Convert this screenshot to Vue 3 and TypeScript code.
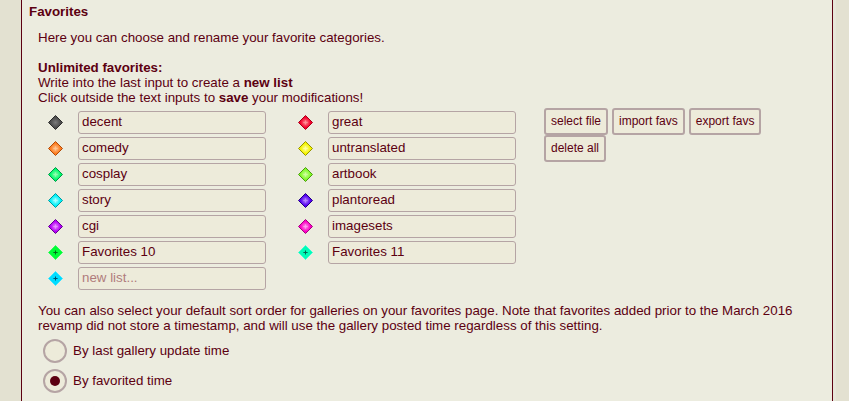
<script setup lang="ts">
import { ref } from 'vue'

interface Favorite {
  name: string
  edge: string
  fill: string
  glow: string
  extra?: boolean
}

const favorites = ref<Favorite[]>([
  { name: 'decent', edge: '#2c2c2c', fill: '#4c4c4c', glow: '#7c7c7c' },
  { name: 'great', edge: '#a80018', fill: '#f4002c', glow: '#ff8c94' },
  { name: 'comedy', edge: '#b04a08', fill: '#fc7c20', glow: '#ffc490' },
  { name: 'untranslated', edge: '#949400', fill: '#f4f400', glow: '#ffffa0' },
  { name: 'cosplay', edge: '#009448', fill: '#00f868', glow: '#90ffb0' },
  { name: 'artbook', edge: '#4c9a10', fill: '#80f828', glow: '#d0ff9c' },
  { name: 'story', edge: '#009a9e', fill: '#00f0f8', glow: '#a4ffff' },
  { name: 'plantoread', edge: '#200080', fill: '#5400f0', glow: '#b484ff' },
  { name: 'cgi', edge: '#600090', fill: '#b400f4', glow: '#e890ff' },
  { name: 'imagesets', edge: '#a40080', fill: '#fc00c4', glow: '#ff9cec' },
  { name: 'Favorites 10', edge: '#30ff58', fill: '#00fc38', glow: '#006c18', extra: true },
  { name: 'Favorites 11', edge: '#38ffd0', fill: '#00fcb8', glow: '#006450', extra: true },
  { name: '', edge: '#38e4ff', fill: '#00dcff', glow: '#005470', extra: true },
])

const sortOrder = ref('favorited')
</script>

<template>
  <div class="page">
    <main class="panel">
      <h2>Favorites</h2>
      <div class="content">
        <p class="intro">Here you can choose and rename your favorite categories.</p>
        <p>
          <b>Unlimited favorites:</b><br />
          Write into the last input to create a <b>new list</b><br />
          Click outside the text inputs to <b>save</b> your modifications!
        </p>
        <div class="editor">
          <div class="favorites">
            <div v-for="(fav, i) in favorites" :key="i" class="favorite">
              <svg width="15" height="15" viewBox="0 0 15 15">
                <defs>
                  <radialGradient :id="'gem' + i">
                    <stop offset="0" :stop-color="fav.extra ? fav.fill : fav.glow" />
                    <stop offset="0.7" :stop-color="fav.fill" />
                  </radialGradient>
                </defs>
                <path
                  d="M7.5.5 14.5 7.5 7.5 14.5.5 7.5Z"
                  :fill="`url(#gem${i})`"
                  :stroke="fav.edge"
                />
                <path
                  v-if="i > 0"
                  d="M7 5.4h1V7h1.6v1H8v1.6H7V8H5.4V7H7Z"
                  :fill="fav.glow"
                />
              </svg>
              <input v-model="fav.name" type="text" placeholder="new list..." spellcheck="false" />
            </div>
          </div>
          <div class="actions">
            <button>select file</button>
            <button>import favs</button>
            <button>export favs</button>
            <button>delete all</button>
          </div>
        </div>
        <p class="note">
          You can also select your default sort order for galleries on your favorites page. Note that
          favorites added prior to the March 2016 revamp did not store a timestamp, and will use the
          gallery posted time regardless of this setting.
        </p>
        <div class="options">
          <label><input v-model="sortOrder" type="radio" value="updated" /><span>By last gallery update time</span></label>
          <label><input v-model="sortOrder" type="radio" value="favorited" /><span>By favorited time</span></label>
        </div>
      </div>
    </main>
  </div>
</template>

<style>
body {
  background: #e3e1d1;
  overflow: hidden;
}
</style>

<style scoped>
.page {
  height: 401px;
  padding: 0 16px 0 21px;
  overflow: hidden;
  background: #e3e1d1;
  color: #5c0011;
  font: 13.333px/15px 'Liberation Sans', Arial, sans-serif;
}
.panel {
  box-sizing: border-box;
  width: 812px;
  height: 401px;
  padding: 4px 7px 0;
  border: solid #5c0011;
  border-width: 0 1px;
  background: #ececdf;
  box-shadow: 3px 0 #e7e6d9;
}
h2 {
  margin: 0;
  font-size: 13.333px;
  line-height: 15px;
}
.content {
  padding: 11px 9px 0;
}
p {
  margin: 0;
}
.intro {
  margin-bottom: 15px;
}
.editor {
  display: flex;
  margin-top: 3px;
}
.favorites {
  display: grid;
  grid-template-columns: 250px 250px;
  grid-auto-rows: 26px;
  width: 506px;
  padding-top: 3px;
}
.favorite {
  display: flex;
  align-items: flex-start;
  gap: 15px;
  padding-left: 10px;
}
.favorite svg {
  margin-top: 4px;
}
.favorite input {
  box-sizing: border-box;
  width: 188px;
  height: 23px;
  margin: 0;
  padding: 1px 3px 3px;
  border: 1px solid #b5a4a4;
  border-radius: 3px;
  outline: none;
  background: #edebda;
  color: inherit;
  font: inherit;
}
.favorite input::placeholder {
  color: #b07c7c;
  opacity: 1;
}
.actions {
  display: flex;
  flex-wrap: wrap;
  align-content: flex-start;
  column-gap: 4px;
  width: 240px;
}
button {
  box-sizing: border-box;
  height: 27px;
  margin: 0;
  padding: 0 5px 1px;
  border: 2px solid #b5a4a4;
  border-radius: 3px;
  background: #edebda;
  color: inherit;
  font: 12px/15px 'Liberation Sans', Arial, sans-serif;
}
.note {
  margin-top: 10px;
}
.options {
  display: flex;
  flex-direction: column;
  gap: 6px;
  padding: 6px 0 0 5px;
}
label {
  display: flex;
  align-items: center;
  gap: 6px;
  height: 24px;
}
label span {
  padding-bottom: 2px;
}
input[type='radio'] {
  appearance: none;
  display: grid;
  place-items: center;
  box-sizing: border-box;
  width: 24px;
  height: 24px;
  margin: 0;
  border: 2px solid #b5a4a4;
  border-radius: 50%;
  background: #edebda;
}
input[type='radio']:checked::before {
  content: '';
  width: 10px;
  height: 10px;
  border-radius: 50%;
  background: #5c0011;
}
</style>
